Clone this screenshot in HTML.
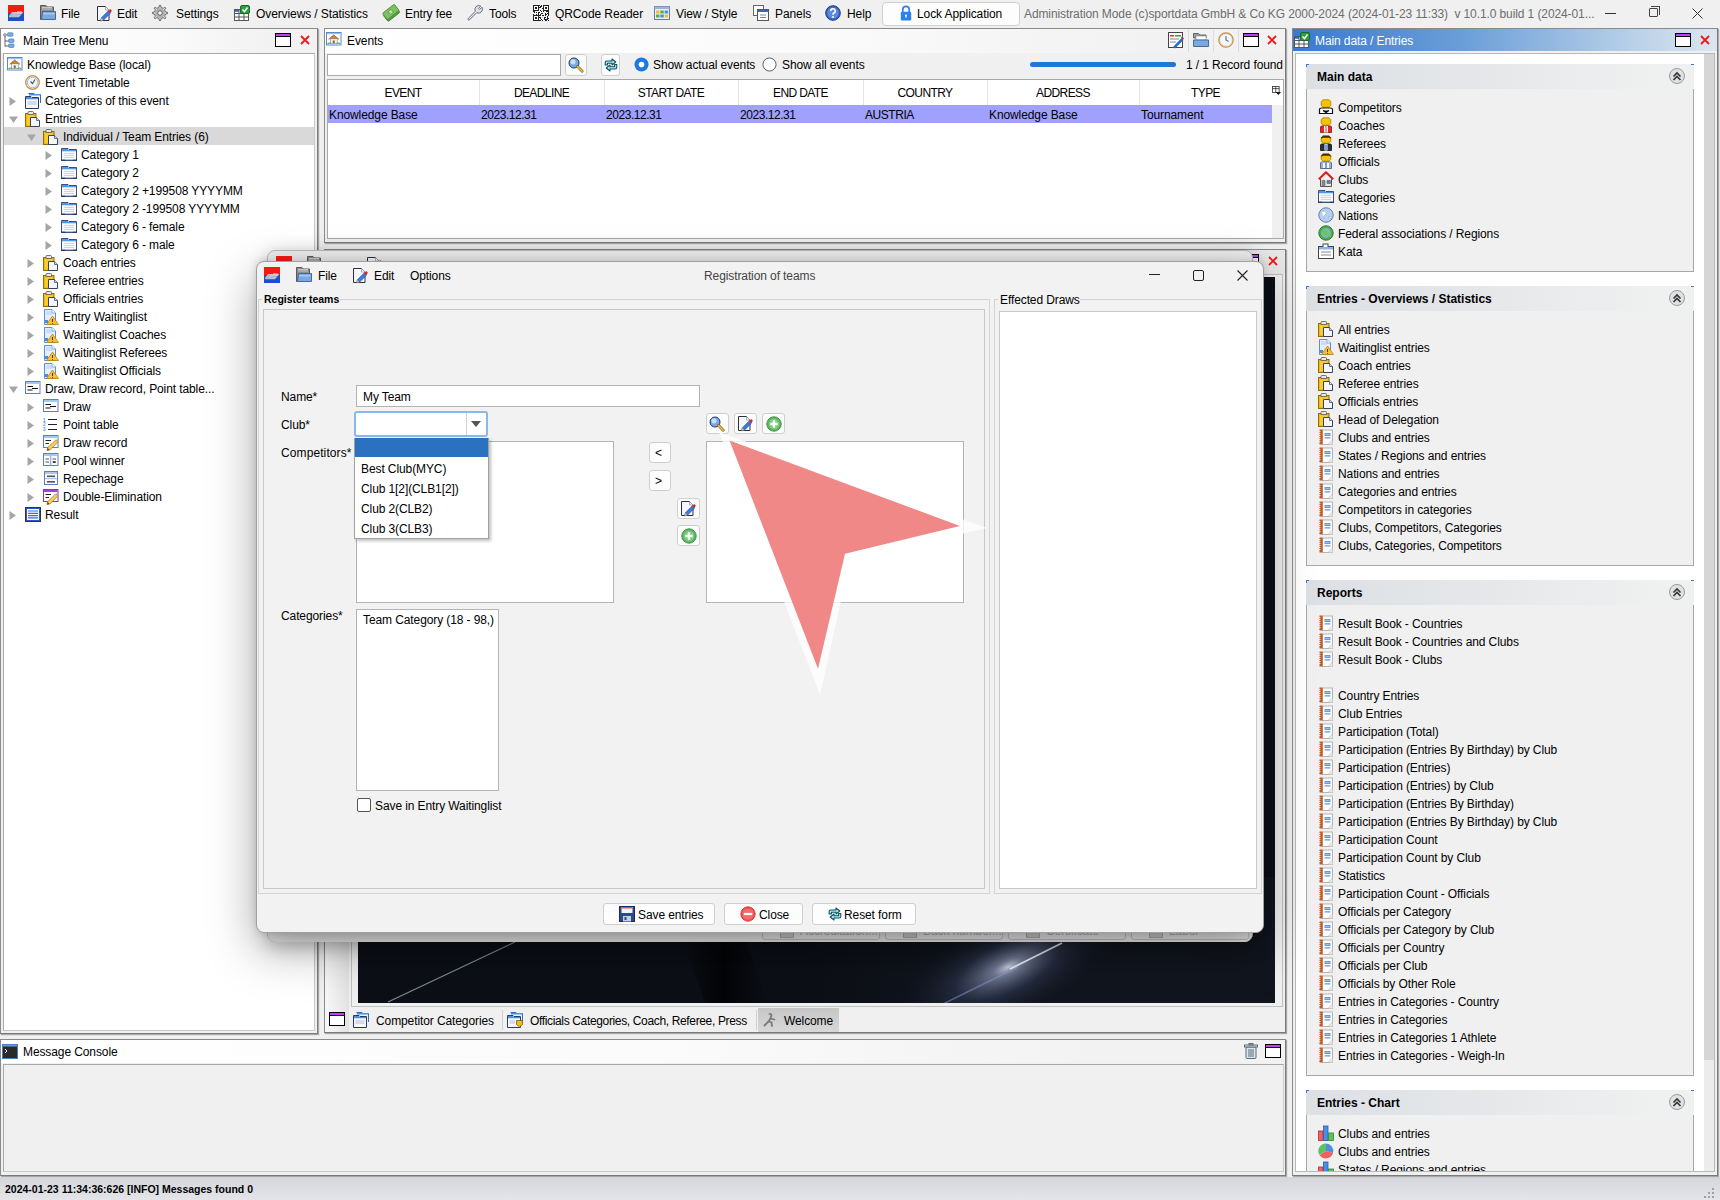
<!DOCTYPE html><html><head><meta charset="utf-8"><style>
*{margin:0;padding:0;box-sizing:border-box}
html,body{width:1720px;height:1200px;overflow:hidden;background:#f0f0f0;font-family:"Liberation Sans",sans-serif;font-size:12px;color:#000}
div,svg{position:absolute}
.t{white-space:nowrap;line-height:18px;height:18px;letter-spacing:-0.1px}
.b{font-weight:bold}
.ic{overflow:visible}
</style></head><body>
<svg width="0" height="0" style="position:absolute"><defs><symbol id="logo" viewBox="0 0 16 16" overflow="visible"><rect x="0" y="0" width="16" height="8.5" fill="#f41a14"/><rect x="0" y="8" width="16" height="8" fill="#1c4fcf"/><path d="M1.5 11 L4 7.5 H14.5 L13.5 9 H6 L5.5 9.8 H12.5 L11 11.8 H1.5Z" fill="#b4b4b4" stroke="#fff" stroke-width="0.5"/><rect x="9" y="6.5" width="5" height="1" fill="#ddd"/></symbol><symbol id="folder" viewBox="0 0 16 16" overflow="visible"><path d="M0.5 0.5 H6 L7.5 2 H13.5 V14.5 H0.5Z" fill="#8c8c8c" stroke="#5a5a5a"/><path d="M2 2.5 H12 M2 4 H12" stroke="#c8c8c8"/><path d="M2.5 6.5 H15.5 V14.5 H1.5 Z" fill="#7aa8e0" stroke="#46689a"/><path d="M3 8 H14.5 V9.5 H3Z" fill="#a8c8f0"/></symbol><symbol id="edit" viewBox="0 0 16 16" overflow="visible"><path d="M1.5 1.5 H9.5 L13 5 V15.5 H1.5Z" fill="#f4f6fb" stroke="#2a3040"/><path d="M9.5 1.5 V5 H13" fill="#fff" stroke="#8a90a0" stroke-width="0.7"/><path d="M5.2 13 L12.4 5.8 L14.6 8 L7.4 15.2 L4.6 15.8Z" fill="#3a7ae8" stroke="#1a3a80" stroke-width="0.6"/><path d="M12.4 5.8 L13.6 4.6 Q14.3 4 15 4.6 L15.4 5 Q16 5.7 15.4 6.4 L14.6 8Z" fill="#e82020"/><path d="M4.6 15.8 L5.2 13 L7.4 15.2Z" fill="#f0c050"/></symbol><symbol id="gear" viewBox="0 0 16 16" overflow="visible"><path d="M13.51 6.99 L15.56 7.25 L15.56 8.75 L13.51 9.01 L12.61 11.18 L13.88 12.82 L12.82 13.88 L11.18 12.61 L9.01 13.51 L8.75 15.56 L7.25 15.56 L6.99 13.51 L4.82 12.61 L3.18 13.88 L2.12 12.82 L3.39 11.18 L2.49 9.01 L0.44 8.75 L0.44 7.25 L2.49 6.99 L3.39 4.82 L2.12 3.18 L3.18 2.12 L4.82 3.39 L6.99 2.49 L7.25 0.44 L8.75 0.44 L9.01 2.49 L11.18 3.39 L12.82 2.12 L13.88 3.18 L12.61 4.82Z" fill="#d8d8d8" stroke="#6a6a6a" stroke-width="1"/><circle cx="8" cy="8" r="4.2" fill="#bdbdbd" stroke="#8a8a8a" stroke-width="0.6"/><circle cx="8" cy="8" r="2.3" fill="#fafafa" stroke="#5a5a5a" stroke-width="1"/></symbol><symbol id="overview" viewBox="0 0 16 16" overflow="visible"><rect x="0.5" y="4.5" width="14" height="11" fill="#fff" stroke="#555"/><path d="M0.5 8.5h14M0.5 12h14M5 4.5v11M10 8.5v7" stroke="#555" stroke-width="1"/><rect x="1" y="5" width="4" height="1.8" fill="#2a6ad0"/><rect x="6.5" y="0.5" width="9" height="8" rx="1.5" fill="#2aa040" stroke="#1a6a20"/><path d="M8.5 4.5l2 2 3-4" stroke="#fff" stroke-width="1.5" fill="none"/></symbol><symbol id="money" viewBox="0 0 16 16" overflow="visible"><g transform="rotate(-38 8 8)"><rect x="0.5" y="5" width="15" height="8" rx="1" fill="#5aa048" stroke="#3a7a2a" stroke-width="0.8"/><rect x="1" y="3" width="15" height="8" rx="1" fill="#7cc060" stroke="#4a8a38" stroke-width="0.8"/><circle cx="8.5" cy="7" r="2.2" fill="#b8e0a0" stroke="#4a8a38" stroke-width="0.6"/></g></symbol><symbol id="wrench" viewBox="0 0 16 16" overflow="visible"><path d="M1.2 13.4 L8.3 6.3 A4 4 0 0 1 13.8 1 L11.5 3.3 L12.7 4.5 L15 2.2 A4 4 0 0 1 9.7 7.7 L2.6 14.8 Q1.9 15.5 1.2 14.8 Q0.5 14.1 1.2 13.4Z" fill="#dfe3e8" stroke="#5c6470" stroke-width="0.9" stroke-linejoin="round"/></symbol><symbol id="qr" viewBox="0 0 16 16" overflow="visible"><g fill="#222"><rect x="6" y="0" width="1" height="1"/><rect x="8" y="0" width="1" height="1"/><rect x="7" y="1" width="1" height="1"/><rect x="8" y="1" width="1" height="1"/><rect x="6" y="2" width="1" height="1"/><rect x="7" y="2" width="1" height="1"/><rect x="9" y="3" width="1" height="1"/><rect x="7" y="5" width="1" height="1"/><rect x="0" y="6" width="1" height="1"/><rect x="1" y="6" width="1" height="1"/><rect x="8" y="6" width="1" height="1"/><rect x="10" y="6" width="1" height="1"/><rect x="13" y="6" width="1" height="1"/><rect x="14" y="6" width="1" height="1"/><rect x="15" y="6" width="1" height="1"/><rect x="1" y="7" width="1" height="1"/><rect x="3" y="7" width="1" height="1"/><rect x="5" y="7" width="1" height="1"/><rect x="6" y="7" width="1" height="1"/><rect x="15" y="7" width="1" height="1"/><rect x="5" y="8" width="1" height="1"/><rect x="8" y="8" width="1" height="1"/><rect x="9" y="8" width="1" height="1"/><rect x="12" y="8" width="1" height="1"/><rect x="14" y="8" width="1" height="1"/><rect x="15" y="8" width="1" height="1"/><rect x="0" y="9" width="1" height="1"/><rect x="3" y="9" width="1" height="1"/><rect x="5" y="9" width="1" height="1"/><rect x="7" y="9" width="1" height="1"/><rect x="12" y="9" width="1" height="1"/><rect x="13" y="9" width="1" height="1"/><rect x="15" y="9" width="1" height="1"/><rect x="6" y="10" width="1" height="1"/><rect x="7" y="10" width="1" height="1"/><rect x="9" y="10" width="1" height="1"/><rect x="10" y="10" width="1" height="1"/><rect x="12" y="10" width="1" height="1"/><rect x="15" y="10" width="1" height="1"/><rect x="14" y="11" width="1" height="1"/><rect x="6" y="12" width="1" height="1"/><rect x="7" y="12" width="1" height="1"/><rect x="11" y="12" width="1" height="1"/><rect x="12" y="12" width="1" height="1"/><rect x="14" y="12" width="1" height="1"/><rect x="7" y="13" width="1" height="1"/><rect x="11" y="13" width="1" height="1"/><rect x="14" y="13" width="1" height="1"/><rect x="15" y="13" width="1" height="1"/><rect x="8" y="14" width="1" height="1"/><rect x="11" y="14" width="1" height="1"/><rect x="12" y="14" width="1" height="1"/><rect x="13" y="14" width="1" height="1"/><rect x="14" y="14" width="1" height="1"/><rect x="6" y="15" width="1" height="1"/><rect x="7" y="15" width="1" height="1"/><rect x="9" y="15" width="1" height="1"/><rect x="12" y="15" width="1" height="1"/><rect x="13" y="15" width="1" height="1"/><rect x="15" y="15" width="1" height="1"/><path d="M0 0h6v6h-6z M10 0h6v6h-6z M0 10h6v6h-6z" /></g><g fill="#fff"><rect x="1" y="1" width="4" height="4"/><rect x="11" y="1" width="4" height="4"/><rect x="1" y="11" width="4" height="4"/></g><g fill="#222"><rect x="2" y="2" width="2" height="2"/><rect x="12" y="2" width="2" height="2"/><rect x="2" y="12" width="2" height="2"/></g></symbol><symbol id="view" viewBox="0 0 16 16" overflow="visible"><rect x="0.5" y="1.5" width="15" height="13" fill="#e8eef8" stroke="#6a7a9a"/><rect x="0.5" y="1.5" width="15" height="2.5" fill="#9ab4dc"/><g><rect x="2" y="5.5" width="3.5" height="3" fill="#f0c030"/><rect x="6.3" y="5.5" width="3.5" height="3" fill="#60b040"/><rect x="10.6" y="5.5" width="3.5" height="3" fill="#4a90e0"/><rect x="2" y="9.5" width="3.5" height="3" fill="#60b040"/><rect x="6.3" y="9.5" width="3.5" height="3" fill="#4a90e0"/><rect x="10.6" y="9.5" width="3.5" height="3" fill="#f0c030"/></g></symbol><symbol id="panels" viewBox="0 0 16 16" overflow="visible"><rect x="0.5" y="0.5" width="10" height="10" fill="#fff" stroke="#666"/><rect x="4.5" y="4.5" width="11" height="11" fill="#fff" stroke="#555"/><rect x="5" y="5" width="10" height="2" fill="#3a6ab0"/><path d="M7 10h6M7 12.5h6" stroke="#888"/></symbol><symbol id="help" viewBox="0 0 16 16" overflow="visible"><circle cx="8" cy="8" r="7.3" fill="#3a6ac8" stroke="#223a80"/><circle cx="8" cy="8" r="5.5" fill="#5a8ae0"/><path d="M5.8 6 a2.2 2.2 0 1 1 3 2 c-0.8 0.4 -0.8 1 -0.8 1.8" stroke="#fff" stroke-width="1.6" fill="none"/><circle cx="8" cy="12" r="1" fill="#fff"/></symbol><symbol id="lock" viewBox="0 0 16 16" overflow="visible"><path d="M2.8 7 V4.6 a3.2 3.2 0 0 1 6.4 0 V7" stroke="#2a82ee" stroke-width="1.7" fill="none"/><rect x="0.8" y="6.8" width="10.4" height="8.6" rx="1.2" fill="#2a82ee"/><circle cx="6" cy="10.6" r="1" fill="#fff"/><rect x="5.5" y="10.6" width="1" height="2.2" fill="#fff"/></symbol><symbol id="tree" viewBox="0 0 16 16" overflow="visible"><circle cx="2" cy="3" r="1.3" fill="#fff" stroke="#555" stroke-width="0.8"/><path d="M2 4.3 V14.5 M2 9 H5.5 M2 14 H5.5" stroke="#555" stroke-width="0.9"/><rect x="4.5" y="0.8" width="5.5" height="3.4" rx="1" fill="#7ab0e8" stroke="#4a78b0" stroke-width="0.7"/><rect x="5.5" y="7" width="5.5" height="3.4" rx="1" fill="#7ab0e8" stroke="#4a78b0" stroke-width="0.7"/><rect x="5.5" y="12" width="5.5" height="3.4" rx="1" fill="#7ab0e8" stroke="#4a78b0" stroke-width="0.7"/></symbol><symbol id="house" viewBox="0 0 16 16" overflow="visible"><rect x="0.5" y="0.5" width="14.5" height="12.5" fill="#fff" stroke="#5a88d0"/><rect x="1" y="1" width="13.5" height="1.2" fill="#9cc0f0"/><path d="M2.5 7.2 L7.75 3 L13 7.2" fill="#d08040" stroke="#a86030" stroke-width="0.8"/><rect x="4.3" y="6.8" width="6.9" height="4.5" fill="#f4f0e8" stroke="#777" stroke-width="0.5"/><rect x="6.8" y="8.5" width="1.9" height="2.8" fill="#666"/><path d="M1.5 11.6 Q4 10.4 5 11.6 M10.5 11.6 Q12 10.4 14 11.6" stroke="#40a030" stroke-width="1.2" fill="none"/></symbol><symbol id="clock" viewBox="0 0 16 16" overflow="visible"><circle cx="7.5" cy="7.5" r="6.8" fill="#f8f4ec" stroke="#c8904a" stroke-width="1.3"/><circle cx="7.5" cy="7.5" r="5.2" fill="#eef4fc" stroke="#8aaedc" stroke-width="0.8"/><path d="M5.5 6.5 L7.5 8.5 L10 4.5" stroke="#555" stroke-width="1.1" fill="none"/></symbol><symbol id="cats" viewBox="0 0 16 16" overflow="visible"><path d="M0.5 13.5 V1.5 H7 L8 2.5 H15.5 V13.5Z" fill="#f8f9fc" stroke="#2a3a6a" stroke-width="0.9"/><path d="M1 2 H6.8 L7.8 3 H15 V4.2 H1Z" fill="#4a98f0"/><path d="M3 6.5 H13 M3 8.5 H13 M3 10.5 H13" stroke="#c4cad6" stroke-width="0.8"/><path d="M0 12.6 H4 V14 H0Z M12 12.6 H16 V14 H12Z" fill="#2a3a6a"/><path d="M4 12.5 H12" stroke="#a8b2c4" stroke-width="0.8"/></symbol><symbol id="clip" viewBox="0 0 16 16" overflow="visible"><rect x="0.5" y="2.5" width="10.5" height="13" fill="#eebb10" stroke="#9a6a08"/><rect x="2" y="4" width="7.5" height="10" fill="#f8cc30"/><path d="M3 3.5 V1.5 Q3 0.5 4 0.5 H7.5 Q8.5 0.5 8.5 1.5 V3.5Z" fill="#e8e8e8" stroke="#555" stroke-width="0.8"/><path d="M5.5 6.5 H11.5 L14.5 9.5 V15.5 H5.5Z" fill="#f4f6fa" stroke="#3a4258"/><path d="M11.5 6.5 V9.5 H14.5" fill="#d8dce8" stroke="#3a4258" stroke-width="0.7"/></symbol><symbol id="wait" viewBox="0 0 16 16" overflow="visible"><path d="M1.5 0.5 H9 L12.5 4 V15.5 H1.5Z" fill="#e4eefc" stroke="#5a90d8"/><path d="M9 0.5 V4 H12.5" fill="#fff" stroke="#5a90d8" stroke-width="0.7"/><path d="M3 3 H8 M3 5 H9" stroke="#a8c4e8" stroke-width="0.8"/><rect x="2" y="11" width="3" height="3" fill="#4a8ae0"/><path d="M9.5 7 L15.5 15.5 H3.5Z" fill="#f6c030" stroke="#c08010" stroke-width="0.8"/><path d="M9.5 10 V13 M9.5 14 V14.8" stroke="#5a3a00" stroke-width="1"/></symbol><symbol id="draw" viewBox="0 0 16 16" overflow="visible"><rect x="0.5" y="0.5" width="14.5" height="12" fill="#fdfdfd" stroke="#5a80c0"/><rect x="1" y="1" width="13.5" height="2" fill="#a8c8f0"/><path d="M2.5 5.5 H8 M7 7.5 H13 M2.5 9 H7.5" stroke="#111" stroke-width="1.2"/></symbol><symbol id="points" viewBox="0 0 16 16" overflow="visible"><g fill="#5a90e0" font-size="4.5" font-family="Liberation Sans" font-weight="bold"><text x="0" y="4.5">1</text><text x="0" y="9">2</text><text x="0" y="13.5">3</text></g><path d="M5 2.5h9M5 7.5h9M5 12.5h9" stroke="#222" stroke-width="1.1"/></symbol><symbol id="drawrec" viewBox="0 0 16 16" overflow="visible"><rect x="0.5" y="0.5" width="14.5" height="12" fill="#fdfdfd" stroke="#5a80c0"/><rect x="1" y="1" width="13.5" height="2" fill="#a8c8f0"/><path d="M2.5 5.5 H8 M2.5 8.5 H6" stroke="#222" stroke-width="1.1"/><path d="M4.5 12.8 L12.3 5.4 Q13.2 4.7 14.2 5.6 Q15.1 6.6 14.4 7.4 L6.8 15 L4 15.6Z" fill="#f6d060" stroke="#b07820" stroke-width="0.8"/><path d="M4 15.6 L4.5 12.8 L6.8 15Z" fill="#7a5030"/></symbol><symbol id="pool" viewBox="0 0 16 16" overflow="visible"><rect x="0.5" y="0.5" width="14.5" height="12" fill="#fdfdfd" stroke="#5a80c0"/><rect x="1" y="1" width="13.5" height="2" fill="#a8c8f0"/><path d="M7.75 3 V12.5" stroke="#7a9ad0"/><path d="M2.5 6 H6 M2.5 9 H6 M9.5 6 H13 M9.5 9 H13" stroke="#555" stroke-width="1"/><rect x="10" y="8.3" width="2.5" height="1.5" fill="#222"/></symbol><symbol id="repe" viewBox="0 0 16 16" overflow="visible"><rect x="1.5" y="0.5" width="13" height="13" fill="#fdfdfd" stroke="#5a80c0"/><rect x="2" y="1" width="12" height="2" fill="#a8c8f0"/><rect x="2" y="7" width="12" height="1.2" fill="#a8c8f0"/><rect x="4" y="4.5" width="8" height="1.6" fill="#555"/><rect x="4" y="10" width="8" height="1.6" fill="#555"/></symbol><symbol id="dbl" viewBox="0 0 16 16" overflow="visible"><rect x="0.5" y="0.5" width="14.5" height="12" fill="#fdfdfd" stroke="#8a30d0"/><rect x="1" y="1" width="13.5" height="2" fill="#a040e8"/><path d="M2.5 5.5 H8 M2.5 8.5 H6" stroke="#222" stroke-width="1.1"/><path d="M4.5 12.8 L12.3 5.4 Q13.2 4.7 14.2 5.6 Q15.1 6.6 14.4 7.4 L6.8 15 L4 15.6Z" fill="#f6d060" stroke="#b07820" stroke-width="0.8"/><path d="M4 15.6 L4.5 12.8 L6.8 15Z" fill="#7a5030"/></symbol><symbol id="result" viewBox="0 0 16 16" overflow="visible"><rect x="0.5" y="0.5" width="15" height="14" fill="#2a58c8" stroke="#333"/><rect x="2" y="2" width="12" height="11" fill="#fff"/><path d="M3 4 H13 M3 6.3 H13 M3 8.6 H13 M3 10.9 H13" stroke="#2a70e8" stroke-width="1.2"/></symbol><symbol id="max" viewBox="0 0 16 16" overflow="visible"><rect x="0" y="0" width="16" height="14" fill="#000"/><rect x="1" y="1" width="14" height="2" fill="#c040f8"/><rect x="1" y="4" width="14" height="9" fill="#fff"/></symbol><symbol id="x" viewBox="0 0 16 16" overflow="visible"><path d="M1 1 L9 9 M9 1 L1 9" stroke="#f01818" stroke-width="1.8"/></symbol><symbol id="search" viewBox="0 0 16 16" overflow="visible"><circle cx="6" cy="6" r="5" fill="#7aa8e0" stroke="#1a3a78" stroke-width="1"/><circle cx="5" cy="4.8" r="2.6" fill="#d8e8fa" opacity="0.85"/><path d="M9.6 9.6 L14.2 14.2" stroke="#7a5a10" stroke-width="2.8" stroke-linecap="round"/><path d="M9.6 9.6 L14.2 14.2" stroke="#f0c040" stroke-width="1.6" stroke-linecap="round"/></symbol><symbol id="refresh" viewBox="0 0 16 16" overflow="visible"><path d="M2.2 8 V5.5 Q2.2 4 3.8 4 H9 V2 L12.8 5 L9 8 V6.3 H4.4 V8Z" fill="#b8e4f4" stroke="#0a5468" stroke-width="1.1" stroke-linejoin="round"/><path d="M13.8 7.5 V10.5 Q13.8 12 12.2 12 H7 V14 L3.2 11 L7 8 V9.7 H11.6 V7.5Z" fill="#a8ecec" stroke="#0a5468" stroke-width="1.1" stroke-linejoin="round"/></symbol><symbol id="report" viewBox="0 0 16 16" overflow="visible"><rect x="4.5" y="1" width="10" height="14.5" fill="#fdfdfd" stroke="#b4b4b4"/><path d="M11 15.5 L14.5 12 V15.5Z" fill="#e4e4e4"/><path d="M10.5 15 L14.5 11" stroke="#c8c8c8"/><rect x="1.5" y="0.5" width="3" height="15" fill="#c85620"/><g fill="#e8e8e8"><rect x="0.3" y="2" width="2.2" height="1"/><rect x="0.3" y="4" width="2.2" height="1"/><rect x="0.3" y="6" width="2.2" height="1"/><rect x="0.3" y="8" width="2.2" height="1"/><rect x="0.3" y="10" width="2.2" height="1"/><rect x="0.3" y="12" width="2.2" height="1"/></g><rect x="6.5" y="4" width="6" height="3" rx="0.6" fill="#6a9ae2"/><rect x="7.5" y="5.2" width="4" height="0.8" fill="#a8c8f0"/><rect x="6.5" y="8.2" width="6" height="1.2" rx="0.5" fill="#6a9ae2"/></symbol><symbol id="comp" viewBox="0 0 16 16" overflow="visible"><path d="M5 0.8 H11 L12.8 2.6 V6.4 L11 8.2 H5 L3.2 6.4 V2.6Z" fill="#f4c400" stroke="#b07a00" stroke-width="0.8"/><path d="M1.5 10.5 Q1.5 9 4 9 H12 Q14.5 9 14.5 10.5 V14.5 H1.5Z" fill="#fff" stroke="#111" stroke-width="1.2"/><path d="M5 11.5 L8 13.5 L11 11.5 M8 13.5 V15" stroke="#111" stroke-width="1.3"/></symbol><symbol id="coach" viewBox="0 0 16 16" overflow="visible"><path d="M5 0.8 H11 L12.8 2.6 V6.4 L11 8.2 H5 L3.2 6.4 V2.6Z" fill="#f4c400" stroke="#b07a00" stroke-width="0.8"/><path d="M2.5 10 Q2.5 9 4 9 H12 Q13.5 9 13.5 10 V15.5 H2.5Z" fill="#e02828" stroke="#901010" stroke-width="0.8"/><path d="M6 9 H10 V15.5 H6Z" fill="#fff"/><path d="M7.5 9 H8.5 V15.5 H7.5Z" fill="#e02828"/></symbol><symbol id="ref" viewBox="0 0 16 16" overflow="visible"><path d="M5 0.8 H11 L12.8 2.6 V6.4 L11 8.2 H5 L3.2 6.4 V2.6Z" fill="#f4c400" stroke="#b07a00" stroke-width="0.8"/><path d="M3.2 3.8 V2.6 L5 0.8 H11 L12.8 2.6 V3.8 L11 2.8 H5Z" fill="#4a2a10"/><path d="M2.5 10 Q2.5 9 4 9 H12 Q13.5 9 13.5 10 V15.5 H2.5Z" fill="#2a2e38" stroke="#111" stroke-width="0.8"/><path d="M6.5 9 H9.5 V15.5 H6.5Z" fill="#fff"/><path d="M7.3 9.5 H8.7 V15 H7.3Z" fill="#2a80e0"/></symbol><symbol id="off" viewBox="0 0 16 16" overflow="visible"><path d="M5 0.8 H11 L12.8 2.6 V6.4 L11 8.2 H5 L3.2 6.4 V2.6Z" fill="#f4c400" stroke="#b07a00" stroke-width="0.8"/><path d="M3.2 3.8 V2.6 L5 0.8 H11 L12.8 2.6 V3.8 L11 2.8 H5Z" fill="#4a2a10"/><path d="M2.5 10 Q2.5 9 4 9 H12 Q13.5 9 13.5 10 V15.5 H2.5Z" fill="#fafafa" stroke="#3a4a70" stroke-width="0.8"/><path d="M3 10 H5 V15 H3Z M11 10 H13 V15 H11Z" fill="#a0b0d0"/><path d="M7.3 9.5 H8.7 V15 H7.3Z" fill="#2a80e0"/></symbol><symbol id="club" viewBox="0 0 16 16" overflow="visible"><path d="M2.5 8 V15.5 H13.5 V8" fill="#e8e8e8" stroke="#555" stroke-width="1"/><path d="M0.8 8.2 L8 1.2 L15.2 8.2" stroke="#e41818" stroke-width="2" fill="none" stroke-linejoin="round"/><path d="M4 9.5 H7 V15.5 H4Z" fill="#8a8a8a" stroke="#555" stroke-width="0.5"/><path d="M9 9.5 H12.5 V12.5 H9Z" fill="#5a7ab8" stroke="#555" stroke-width="0.5"/></symbol><symbol id="globe" viewBox="0 0 16 16" overflow="visible"><circle cx="8" cy="8" r="7.2" fill="#b8d0f0" stroke="#5a80b0"/><path d="M4 5 q2 -2 4 0 q1 2 -1 3 q-2 1 -1 4 M10 10 l3 -1 v3z" fill="#fff" stroke="#8aa8d0" stroke-width="0.6"/></symbol><symbol id="fed" viewBox="0 0 16 16" overflow="visible"><circle cx="8" cy="8" r="7.2" fill="#50a850" stroke="#2a7a2a"/><circle cx="8" cy="8" r="5" fill="#8ac8f0" opacity="0.6"/><path d="M3 6 q3 -3 6 0 q2 3 -2 4 M9 11 l4 -2 v3z" fill="#70c060"/></symbol><symbol id="kata" viewBox="0 0 16 16" overflow="visible"><rect x="0.5" y="3.5" width="15" height="12" fill="#fff" stroke="#444"/><rect x="5" y="1" width="5" height="3.5" fill="#fff" stroke="#444"/><rect x="1" y="4" width="14" height="2.5" fill="#8ab4e8"/><path d="M3 9h10M3 12h10" stroke="#888"/></symbol><symbol id="bars" viewBox="0 0 16 16" overflow="visible"><rect x="0.5" y="6" width="4.5" height="9.5" fill="#f06060" stroke="#b03030" stroke-width="0.8"/><rect x="5.5" y="1" width="4.5" height="14.5" fill="#4a90e0" stroke="#2a5ab0" stroke-width="0.8"/><rect x="10.5" y="8" width="5" height="7.5" fill="#60c060" stroke="#2a8a2a" stroke-width="0.8"/></symbol><symbol id="pie" viewBox="0 0 16 16" overflow="visible"><path d="M8 8 L8 0.5 A7.5 7.5 0 0 1 15 10Z" fill="#4a90e0"/><path d="M8 8 L15 10 A7.5 7.5 0 0 1 1.5 12Z" fill="#f06060"/><path d="M8 8 L1.5 12 A7.5 7.5 0 0 1 8 0.5Z" fill="#60c060"/></symbol><symbol id="save" viewBox="0 0 16 16" overflow="visible"><rect x="0.5" y="0.5" width="15" height="15" fill="#2a4a8a" stroke="#1a2a5a"/><rect x="2.5" y="1" width="11" height="6" fill="#f4f4f4"/><rect x="2.5" y="1" width="11" height="1.5" fill="#e05050"/><rect x="4" y="10" width="8" height="5.5" fill="#c8d0e0"/><rect x="5.5" y="11" width="2" height="3" fill="#2a4a8a"/></symbol><symbol id="closebtn" viewBox="0 0 16 16" overflow="visible"><circle cx="8" cy="8" r="7.2" fill="#f05050" stroke="#d03838" stroke-width="0.9"/><circle cx="8" cy="8" r="5.6" fill="#f46a6a"/><rect x="3.8" y="6.9" width="8.4" height="2.2" fill="#fff"/></symbol><symbol id="reset" viewBox="0 0 16 16" overflow="visible"><path d="M2.2 8 V5.5 Q2.2 4 3.8 4 H9 V2 L12.8 5 L9 8 V6.3 H4.4 V8Z" fill="#b8e4f4" stroke="#0a5468" stroke-width="1.1" stroke-linejoin="round"/><path d="M13.8 7.5 V10.5 Q13.8 12 12.2 12 H7 V14 L3.2 11 L7 8 V9.7 H11.6 V7.5Z" fill="#a8ecec" stroke="#0a5468" stroke-width="1.1" stroke-linejoin="round"/></symbol><symbol id="trash" viewBox="0 0 16 16" overflow="visible"><rect x="3" y="4" width="10" height="11.5" rx="1" fill="#dce4ec" stroke="#5a6a7a"/><rect x="1.5" y="2" width="13" height="2" fill="#dce4ec" stroke="#5a6a7a"/><rect x="6" y="0.5" width="4" height="1.5" fill="none" stroke="#5a6a7a"/><path d="M6 6v8M8 6v8M10 6v8" stroke="#5a6a7a"/></symbol><symbol id="console" viewBox="0 0 16 16" overflow="visible"><rect x="0.5" y="0.5" width="15" height="14" fill="#2a2a2a" stroke="#4a7ac8"/><rect x="1" y="1" width="14" height="1.5" fill="#6a9ad8"/><path d="M3 5l2 2-2 2" stroke="#fff" fill="none" stroke-width="1"/></symbol><symbol id="collapse" viewBox="0 0 16 16" overflow="visible"><circle cx="8" cy="8" r="7.5" fill="#dfe1e5" stroke="#9a9a9a"/><path d="M4.5 8.5 L8 5 L11.5 8.5 M4.5 12 L8 8.5 L11.5 12" stroke="#333" stroke-width="1.6" fill="none"/></symbol><symbol id="cattab" viewBox="0 0 16 16" overflow="visible"><path d="M3.5 0.5 H9 L10 1.5 H15.5 V10" fill="none" stroke="#3a6ab0"/><rect x="4" y="1" width="11" height="1.5" fill="#4a90e8"/><path d="M0.5 15.5 V3.5 H6 L7 4.5 H13.5 V15.5Z" fill="#f6f8fb" stroke="#2a3a68"/><path d="M1 4 H5.8 L6.8 5 H13 V6.3 H1Z" fill="#4a90e8"/><path d="M2.5 9 H11.5 M2.5 11 H11.5" stroke="#b4bccc"/></symbol><symbol id="offtab" viewBox="0 0 16 16" overflow="visible"><path d="M3.5 0.5 H9 L10 1.5 H15.5 V10" fill="none" stroke="#3a6ab0"/><rect x="4" y="1" width="11" height="1.5" fill="#4a90e8"/><path d="M0.5 15.5 V3.5 H6 L7 4.5 H13.5 V15.5Z" fill="#f6f8fb" stroke="#2a3a68"/><path d="M1 4 H5.8 L6.8 5 H13 V6.3 H1Z" fill="#4a90e8"/><path d="M2.5 9 H8 M2.5 11 H8" stroke="#b4bccc"/><path d="M9.5 8.5 H15.5 V12.5 L12.5 15 L9.5 12.5Z" fill="#f0c010" stroke="#6a4a00" stroke-width="0.7"/></symbol><symbol id="run" viewBox="0 0 16 16" overflow="visible"><path d="M7.5 2 Q9 1.5 9.5 3 L8.5 6.5 L12.5 7.5" stroke="#7a7a7a" stroke-width="1.8" fill="none" stroke-linecap="round"/><path d="M8.5 6.5 L6.5 9.5 L2.5 13.5 M6.5 9.5 L9.5 10.5 L10 14" stroke="#7a7a7a" stroke-width="1.8" fill="none" stroke-linecap="round"/></symbol><symbol id="edit2" viewBox="0 0 16 16" overflow="visible"><path d="M1.5 1.5 H9.5 L13 5 V15.5 H1.5Z" fill="#f4f6fb" stroke="#2a3040"/><path d="M9.5 1.5 V5 H13" fill="#fff" stroke="#8a90a0" stroke-width="0.7"/><path d="M5.2 13 L12.4 5.8 L14.6 8 L7.4 15.2 L4.6 15.8Z" fill="#3a7ae8" stroke="#1a3a80" stroke-width="0.6"/><path d="M12.4 5.8 L13.6 4.6 Q14.3 4 15 4.6 L15.4 5 Q16 5.7 15.4 6.4 L14.6 8Z" fill="#e82020"/><path d="M4.6 15.8 L5.2 13 L7.4 15.2Z" fill="#f0c050"/></symbol><symbol id="add" viewBox="0 0 16 16" overflow="visible"><circle cx="8" cy="8" r="7.2" fill="#5ab45e" stroke="#3a8a3e" stroke-width="0.9"/><circle cx="8" cy="8" r="5.4" fill="#7ccc7e"/><path d="M8 4.3 V11.7 M4.3 8 H11.7" stroke="#fff" stroke-width="2.4"/></symbol><symbol id="colhdr" viewBox="0 0 16 16" overflow="visible"><rect x="0.5" y="0.5" width="9" height="8" fill="#fff" stroke="#222"/><path d="M0.5 3.5h9M5 0.5v8" stroke="#222"/><path d="M5 8 L12 8 L8.5 12z" fill="#111"/></symbol><symbol id="radio_on" viewBox="0 0 16 16" overflow="visible"><circle cx="8" cy="8" r="7.5" fill="#1e78e0"/><circle cx="8" cy="8" r="3" fill="#fff"/></symbol><symbol id="radio_off" viewBox="0 0 16 16" overflow="visible"><circle cx="8" cy="8" r="7" fill="#fff" stroke="#555" stroke-width="1"/></symbol><symbol id="editsm" viewBox="0 0 16 16" overflow="visible"><path d="M1.5 1.5 H9.5 L13 5 V15.5 H1.5Z" fill="#f4f6fb" stroke="#2a3040"/><path d="M9.5 1.5 V5 H13" fill="#fff" stroke="#8a90a0" stroke-width="0.7"/><path d="M5.2 13 L12.4 5.8 L14.6 8 L7.4 15.2 L4.6 15.8Z" fill="#3a7ae8" stroke="#1a3a80" stroke-width="0.6"/><path d="M12.4 5.8 L13.6 4.6 Q14.3 4 15 4.6 L15.4 5 Q16 5.7 15.4 6.4 L14.6 8Z" fill="#e82020"/><path d="M4.6 15.8 L5.2 13 L7.4 15.2Z" fill="#f0c050"/></symbol><symbol id="timer" viewBox="0 0 16 16" overflow="visible"><circle cx="8" cy="8" r="7.2" fill="#f0e0c0" stroke="#c09050" stroke-width="1.2"/><circle cx="8" cy="8" r="5.5" fill="#f4f8ff"/><path d="M8 4v4l2.5 1.5" stroke="#4a6a9a" stroke-width="1.1" fill="none"/></symbol><symbol id="tbfolder" viewBox="0 0 16 16" overflow="visible"><path d="M0.5 1.5h5l1.5 1.5h6v3h-12.5z" fill="#9a9a9a" stroke="#666"/><path d="M3 4h10v4H3z" fill="#fff" stroke="#888" stroke-width="0.6"/><path d="M0.5 14.5 L0.5 8 H15.5 V14.5Z" fill="#7aaae0" stroke="#4a6a9a"/></symbol><symbol id="tbedit" viewBox="0 0 16 16" overflow="visible"><rect x="0.5" y="0.5" width="14" height="15" fill="#fff" stroke="#444"/><rect x="2" y="3" width="4" height="1.5" fill="#e03030"/><rect x="7" y="3" width="6" height="1.5" fill="#30a030"/><path d="M2 7h9M2 10h6" stroke="#888"/><path d="M5 15 L13.5 6 L15.5 8 L7 16.5Z" fill="#2a6ad0"/><path d="M13 5.5 l1-1 2 2 -1 1z" fill="#e02020"/></symbol></defs></svg>
<svg class="ic" style="left:8px;top:5px;" width="16" height="16" viewBox="0 0 16 16"><use href="#logo"/></svg>
<svg class="ic" style="left:40px;top:5px;" width="16" height="16" viewBox="0 0 16 16"><use href="#folder"/></svg>
<div class="t" style="left:61px;top:4.84px;">File</div>
<svg class="ic" style="left:96px;top:5px;" width="16" height="16" viewBox="0 0 16 16"><use href="#edit"/></svg>
<div class="t" style="left:117px;top:4.84px;">Edit</div>
<svg class="ic" style="left:152px;top:5px;" width="16" height="16" viewBox="0 0 16 16"><use href="#gear"/></svg>
<div class="t" style="left:176px;top:4.84px;">Settings</div>
<svg class="ic" style="left:234px;top:5px;" width="16" height="16" viewBox="0 0 16 16"><use href="#overview"/></svg>
<div class="t" style="left:256px;top:4.84px;">Overviews / Statistics</div>
<svg class="ic" style="left:383px;top:5px;" width="16" height="16" viewBox="0 0 16 16"><use href="#money"/></svg>
<div class="t" style="left:405px;top:4.84px;">Entry fee</div>
<svg class="ic" style="left:467px;top:5px;" width="16" height="16" viewBox="0 0 16 16"><use href="#wrench"/></svg>
<div class="t" style="left:489px;top:4.84px;">Tools</div>
<svg class="ic" style="left:533px;top:5px;" width="16" height="16" viewBox="0 0 16 16"><use href="#qr"/></svg>
<div class="t" style="left:555px;top:4.84px;">QRCode Reader</div>
<svg class="ic" style="left:654px;top:5px;" width="16" height="16" viewBox="0 0 16 16"><use href="#view"/></svg>
<div class="t" style="left:676px;top:4.84px;">View / Style</div>
<svg class="ic" style="left:753px;top:5px;" width="16" height="16" viewBox="0 0 16 16"><use href="#panels"/></svg>
<div class="t" style="left:775px;top:4.84px;">Panels</div>
<svg class="ic" style="left:825px;top:5px;" width="16" height="16" viewBox="0 0 16 16"><use href="#help"/></svg>
<div class="t" style="left:847px;top:4.84px;">Help</div>
<div class="" style="left:882px;top:2px;width:138px;height:24px;background:#fdfdfd;border:1px solid #cfcfcf;border-radius:4px"></div>
<svg class="ic" style="left:900px;top:5px;" width="16" height="16" viewBox="0 0 16 16"><use href="#lock"/></svg>
<div class="t" style="left:917px;top:4.84px;">Lock Application</div>
<div class="t" style="left:1024px;top:4.84px;color:#6d6d6d;white-space:pre">Administration Mode (c)sportdata GmbH &amp; Co KG 2000-2024 (2024-01-23 11:33)  v 10.1.0 build 1 (2024-01...</div>
<div class="" style="left:1605px;top:13px;width:11px;height:1px;background:#333"></div>
<div class="" style="left:1649px;top:8px;width:9px;height:9px;border:1px solid #444;border-radius:1px"></div>
<div class="" style="left:1651px;top:6px;width:9px;height:9px;border-top:1px solid #444;border-right:1px solid #444"></div>
<svg style="left:1692px;top:8px" width="11" height="11"><path d="M0.5 0.5L10.5 10.5M10.5 0.5L0.5 10.5" stroke="#333" stroke-width="1"/></svg>
<div class="" style="left:0px;top:28px;width:318px;height:1006px;border:1px solid #8a8a8a;border-right:1px solid #7a7a7a;border-bottom:1px solid #7a7a7a;box-shadow:1px 1px 1px #a8a8a8;background:#f0f0f0"></div>
<div class="" style="left:1px;top:29px;width:316px;height:24px;background:linear-gradient(90deg,#ffffff 0%,#fbfbfb 50%,#f2f2f2 85%)"></div>
<svg class="ic" style="left:3px;top:32px;" width="16" height="16" viewBox="0 0 16 16"><use href="#tree"/></svg>
<div class="t" style="left:23px;top:31.84px;">Main Tree Menu</div>
<svg class="ic" style="left:275px;top:33px;" width="16" height="16" viewBox="0 0 16 16"><use href="#max"/></svg>
<svg class="ic" style="left:300px;top:35px;" width="16" height="16" viewBox="0 0 16 16"><use href="#x"/></svg>
<div class="" style="left:3px;top:53px;width:312px;height:978px;background:#fff;border:1px solid #a8a8a8;border-right-color:#c8c8c8;border-bottom-color:#c8c8c8"></div>
<div class="" style="left:4px;top:127px;width:310px;height:18px;background:#d9d9d9"></div>
<svg class="ic" style="left:7px;top:57px;" width="16" height="16" viewBox="0 0 16 16"><use href="#house"/></svg>
<div class="t" style="left:27px;top:56.0px;">Knowledge Base (local)</div>
<svg class="ic" style="left:25px;top:75px;" width="16" height="16" viewBox="0 0 16 16"><use href="#clock"/></svg>
<div class="t" style="left:45px;top:74.0px;">Event Timetable</div>
<svg style="left:9px;top:97px" width="8" height="9"><path d="M0.5 0 L7 4.5 L0.5 9Z" fill="#a6a6a6"/></svg>
<svg class="ic" style="left:25px;top:93px;" width="16" height="16" viewBox="0 0 16 16"><use href="#cattab"/></svg>
<div class="t" style="left:45px;top:92.0px;">Categories of this event</div>
<svg style="left:9px;top:116px" width="9" height="8"><path d="M0 0.5 L9 0.5 L4.5 7Z" fill="#a6a6a6"/></svg>
<svg class="ic" style="left:25px;top:111px;" width="16" height="16" viewBox="0 0 16 16"><use href="#clip"/></svg>
<div class="t" style="left:45px;top:110.0px;">Entries</div>
<svg style="left:27px;top:134px" width="9" height="8"><path d="M0 0.5 L9 0.5 L4.5 7Z" fill="#a6a6a6"/></svg>
<svg class="ic" style="left:43px;top:129px;" width="16" height="16" viewBox="0 0 16 16"><use href="#clip"/></svg>
<div class="t" style="left:63px;top:128.0px;">Individual / Team Entries (6)</div>
<svg style="left:45px;top:151px" width="8" height="9"><path d="M0.5 0 L7 4.5 L0.5 9Z" fill="#a6a6a6"/></svg>
<svg class="ic" style="left:61px;top:147px;" width="16" height="16" viewBox="0 0 16 16"><use href="#cats"/></svg>
<div class="t" style="left:81px;top:146.0px;">Category 1</div>
<svg style="left:45px;top:169px" width="8" height="9"><path d="M0.5 0 L7 4.5 L0.5 9Z" fill="#a6a6a6"/></svg>
<svg class="ic" style="left:61px;top:165px;" width="16" height="16" viewBox="0 0 16 16"><use href="#cats"/></svg>
<div class="t" style="left:81px;top:164.0px;">Category 2</div>
<svg style="left:45px;top:187px" width="8" height="9"><path d="M0.5 0 L7 4.5 L0.5 9Z" fill="#a6a6a6"/></svg>
<svg class="ic" style="left:61px;top:183px;" width="16" height="16" viewBox="0 0 16 16"><use href="#cats"/></svg>
<div class="t" style="left:81px;top:182.0px;">Category 2 +199508 YYYYMM</div>
<svg style="left:45px;top:205px" width="8" height="9"><path d="M0.5 0 L7 4.5 L0.5 9Z" fill="#a6a6a6"/></svg>
<svg class="ic" style="left:61px;top:201px;" width="16" height="16" viewBox="0 0 16 16"><use href="#cats"/></svg>
<div class="t" style="left:81px;top:200.0px;">Category 2 -199508 YYYYMM</div>
<svg style="left:45px;top:223px" width="8" height="9"><path d="M0.5 0 L7 4.5 L0.5 9Z" fill="#a6a6a6"/></svg>
<svg class="ic" style="left:61px;top:219px;" width="16" height="16" viewBox="0 0 16 16"><use href="#cats"/></svg>
<div class="t" style="left:81px;top:218.0px;">Category 6 - female</div>
<svg style="left:45px;top:241px" width="8" height="9"><path d="M0.5 0 L7 4.5 L0.5 9Z" fill="#a6a6a6"/></svg>
<svg class="ic" style="left:61px;top:237px;" width="16" height="16" viewBox="0 0 16 16"><use href="#cats"/></svg>
<div class="t" style="left:81px;top:236.0px;">Category 6 - male</div>
<svg style="left:27px;top:259px" width="8" height="9"><path d="M0.5 0 L7 4.5 L0.5 9Z" fill="#a6a6a6"/></svg>
<svg class="ic" style="left:43px;top:255px;" width="16" height="16" viewBox="0 0 16 16"><use href="#clip"/></svg>
<div class="t" style="left:63px;top:254.0px;">Coach entries</div>
<svg style="left:27px;top:277px" width="8" height="9"><path d="M0.5 0 L7 4.5 L0.5 9Z" fill="#a6a6a6"/></svg>
<svg class="ic" style="left:43px;top:273px;" width="16" height="16" viewBox="0 0 16 16"><use href="#clip"/></svg>
<div class="t" style="left:63px;top:272.0px;">Referee entries</div>
<svg style="left:27px;top:295px" width="8" height="9"><path d="M0.5 0 L7 4.5 L0.5 9Z" fill="#a6a6a6"/></svg>
<svg class="ic" style="left:43px;top:291px;" width="16" height="16" viewBox="0 0 16 16"><use href="#clip"/></svg>
<div class="t" style="left:63px;top:290.0px;">Officials entries</div>
<svg style="left:27px;top:313px" width="8" height="9"><path d="M0.5 0 L7 4.5 L0.5 9Z" fill="#a6a6a6"/></svg>
<svg class="ic" style="left:43px;top:309px;" width="16" height="16" viewBox="0 0 16 16"><use href="#wait"/></svg>
<div class="t" style="left:63px;top:308.0px;">Entry Waitinglist</div>
<svg style="left:27px;top:331px" width="8" height="9"><path d="M0.5 0 L7 4.5 L0.5 9Z" fill="#a6a6a6"/></svg>
<svg class="ic" style="left:43px;top:327px;" width="16" height="16" viewBox="0 0 16 16"><use href="#wait"/></svg>
<div class="t" style="left:63px;top:326.0px;">Waitinglist Coaches</div>
<svg style="left:27px;top:349px" width="8" height="9"><path d="M0.5 0 L7 4.5 L0.5 9Z" fill="#a6a6a6"/></svg>
<svg class="ic" style="left:43px;top:345px;" width="16" height="16" viewBox="0 0 16 16"><use href="#wait"/></svg>
<div class="t" style="left:63px;top:344.0px;">Waitinglist Referees</div>
<svg style="left:27px;top:367px" width="8" height="9"><path d="M0.5 0 L7 4.5 L0.5 9Z" fill="#a6a6a6"/></svg>
<svg class="ic" style="left:43px;top:363px;" width="16" height="16" viewBox="0 0 16 16"><use href="#wait"/></svg>
<div class="t" style="left:63px;top:362.0px;">Waitinglist Officials</div>
<svg style="left:9px;top:386px" width="9" height="8"><path d="M0 0.5 L9 0.5 L4.5 7Z" fill="#a6a6a6"/></svg>
<svg class="ic" style="left:25px;top:381px;" width="16" height="16" viewBox="0 0 16 16"><use href="#draw"/></svg>
<div class="t" style="left:45px;top:380.0px;">Draw, Draw record, Point table...</div>
<svg style="left:27px;top:403px" width="8" height="9"><path d="M0.5 0 L7 4.5 L0.5 9Z" fill="#a6a6a6"/></svg>
<svg class="ic" style="left:43px;top:399px;" width="16" height="16" viewBox="0 0 16 16"><use href="#draw"/></svg>
<div class="t" style="left:63px;top:398.0px;">Draw</div>
<svg style="left:27px;top:421px" width="8" height="9"><path d="M0.5 0 L7 4.5 L0.5 9Z" fill="#a6a6a6"/></svg>
<svg class="ic" style="left:43px;top:417px;" width="16" height="16" viewBox="0 0 16 16"><use href="#points"/></svg>
<div class="t" style="left:63px;top:416.0px;">Point table</div>
<svg style="left:27px;top:439px" width="8" height="9"><path d="M0.5 0 L7 4.5 L0.5 9Z" fill="#a6a6a6"/></svg>
<svg class="ic" style="left:43px;top:435px;" width="16" height="16" viewBox="0 0 16 16"><use href="#drawrec"/></svg>
<div class="t" style="left:63px;top:434.0px;">Draw record</div>
<svg style="left:27px;top:457px" width="8" height="9"><path d="M0.5 0 L7 4.5 L0.5 9Z" fill="#a6a6a6"/></svg>
<svg class="ic" style="left:43px;top:453px;" width="16" height="16" viewBox="0 0 16 16"><use href="#pool"/></svg>
<div class="t" style="left:63px;top:452.0px;">Pool winner</div>
<svg style="left:27px;top:475px" width="8" height="9"><path d="M0.5 0 L7 4.5 L0.5 9Z" fill="#a6a6a6"/></svg>
<svg class="ic" style="left:43px;top:471px;" width="16" height="16" viewBox="0 0 16 16"><use href="#repe"/></svg>
<div class="t" style="left:63px;top:470.0px;">Repechage</div>
<svg style="left:27px;top:493px" width="8" height="9"><path d="M0.5 0 L7 4.5 L0.5 9Z" fill="#a6a6a6"/></svg>
<svg class="ic" style="left:43px;top:489px;" width="16" height="16" viewBox="0 0 16 16"><use href="#dbl"/></svg>
<div class="t" style="left:63px;top:488.0px;">Double-Elimination</div>
<svg style="left:9px;top:511px" width="8" height="9"><path d="M0.5 0 L7 4.5 L0.5 9Z" fill="#a6a6a6"/></svg>
<svg class="ic" style="left:25px;top:507px;" width="16" height="16" viewBox="0 0 16 16"><use href="#result"/></svg>
<div class="t" style="left:45px;top:506.0px;">Result</div>
<div class="" style="left:324px;top:28px;width:962px;height:215px;border:1px solid #8a8a8a;border-right-color:#7a7a7a;border-bottom-color:#7a7a7a;box-shadow:1px 1px 1px #a8a8a8;background:#f0f0f0"></div>
<div class="" style="left:325px;top:29px;width:960px;height:24px;background:linear-gradient(90deg,#ffffff 0%,#fbfbfb 50%,#f2f2f2 85%)"></div>
<svg class="ic" style="left:326px;top:32px;" width="16" height="16" viewBox="0 0 16 16"><use href="#house"/></svg>
<div class="t" style="left:347px;top:31.84px;">Events</div>
<svg class="ic" style="left:1168px;top:32px;" width="16" height="16" viewBox="0 0 16 16"><use href="#tbedit"/></svg>
<div class="" style="left:1188px;top:30px;width:1px;height:22px;background:#dcdcdc"></div>
<svg class="ic" style="left:1193px;top:32px;" width="16" height="16" viewBox="0 0 16 16"><use href="#tbfolder"/></svg>
<div class="" style="left:1213px;top:30px;width:1px;height:22px;background:#dcdcdc"></div>
<svg class="ic" style="left:1218px;top:32px;" width="16" height="16" viewBox="0 0 16 16"><use href="#timer"/></svg>
<div class="" style="left:1238px;top:30px;width:1px;height:22px;background:#dcdcdc"></div>
<svg class="ic" style="left:1243px;top:33px;" width="16" height="16" viewBox="0 0 16 16"><use href="#max"/></svg>
<svg class="ic" style="left:1267px;top:35px;" width="16" height="16" viewBox="0 0 16 16"><use href="#x"/></svg>
<div class="" style="left:327px;top:54px;width:234px;height:22px;background:#fff;border:1px solid #a8a8a8"></div>
<div class="" style="left:565px;top:54px;width:22px;height:22px;background:#fafafa;border:1px solid #cfcfcf;border-radius:3px"></div>
<svg class="ic" style="left:568px;top:57px;" width="16" height="16" viewBox="0 0 16 16"><use href="#search"/></svg>
<div class="" style="left:601px;top:54px;width:19px;height:22px;background:#fdfdfd;border:1px solid #cfcfcf;border-radius:3px"></div>
<svg class="ic" style="left:603px;top:57px;" width="16" height="16" viewBox="0 0 16 16"><use href="#refresh"/></svg>
<svg class="ic" style="left:634px;top:57px;" width="15" height="15" viewBox="0 0 16 16"><use href="#radio_on"/></svg>
<div class="t" style="left:653px;top:55.84px;">Show actual events</div>
<svg class="ic" style="left:762px;top:57px;" width="15" height="15" viewBox="0 0 16 16"><use href="#radio_off"/></svg>
<div class="t" style="left:782px;top:55.84px;">Show all events</div>
<div class="" style="left:1030px;top:62px;width:146px;height:5px;background:#1e78d8;border-radius:3px"></div>
<div class="t" style="left:1186px;top:55.84px;">1 / 1 Record found</div>
<div class="" style="left:327px;top:79px;width:957px;height:160px;background:#fff;border:1px solid #a8a8a8"></div>
<div class="" style="left:328px;top:105px;width:944px;height:18px;background:#a0a0ff"></div>
<div class="" style="left:1272px;top:105px;width:11px;height:133px;background:#f0f0f0"></div>
<div class="t" style="left:327px;top:83.84px;width:152px;text-align:center;letter-spacing:-0.6px">EVENT</div>
<div class="t" style="left:329px;top:105.84px;">Knowledge Base</div>
<div class="" style="left:479px;top:80px;width:1px;height:25px;background:#e4e4e4"></div>
<div class="t" style="left:479px;top:83.84px;width:125px;text-align:center;letter-spacing:-0.6px">DEADLINE</div>
<div class="t" style="left:481px;top:105.84px;letter-spacing:-0.45px">2023.12.31</div>
<div class="" style="left:604px;top:80px;width:1px;height:25px;background:#e4e4e4"></div>
<div class="t" style="left:604px;top:83.84px;width:134px;text-align:center;letter-spacing:-0.6px">START DATE</div>
<div class="t" style="left:606px;top:105.84px;letter-spacing:-0.45px">2023.12.31</div>
<div class="" style="left:738px;top:80px;width:1px;height:25px;background:#e4e4e4"></div>
<div class="t" style="left:738px;top:83.84px;width:125px;text-align:center;letter-spacing:-0.6px">END DATE</div>
<div class="t" style="left:740px;top:105.84px;letter-spacing:-0.45px">2023.12.31</div>
<div class="" style="left:863px;top:80px;width:1px;height:25px;background:#e4e4e4"></div>
<div class="t" style="left:863px;top:83.84px;width:124px;text-align:center;letter-spacing:-0.6px">COUNTRY</div>
<div class="t" style="left:865px;top:105.84px;letter-spacing:-0.45px">AUSTRIA</div>
<div class="" style="left:987px;top:80px;width:1px;height:25px;background:#e4e4e4"></div>
<div class="t" style="left:987px;top:83.84px;width:152px;text-align:center;letter-spacing:-0.6px">ADDRESS</div>
<div class="t" style="left:989px;top:105.84px;">Knowledge Base</div>
<div class="" style="left:1139px;top:80px;width:1px;height:25px;background:#e4e4e4"></div>
<div class="t" style="left:1139px;top:83.84px;width:133px;text-align:center;letter-spacing:-0.6px">TYPE</div>
<div class="t" style="left:1141px;top:105.84px;">Tournament</div>
<svg class="ic" style="left:1272px;top:86px;" width="12" height="12" viewBox="0 0 16 16"><use href="#colhdr"/></svg>
<div class="" style="left:324px;top:249px;width:962px;height:784px;border:1px solid #8a8a8a;border-right-color:#7a7a7a;border-bottom-color:#7a7a7a;box-shadow:1px 1px 1px #a8a8a8;background:#f0f0f0"></div>
<div class="" style="left:325px;top:250px;width:960px;height:24px;background:linear-gradient(90deg,#ffffff 0%,#f4f4f4 60%,#e8e8e8 100%)"></div>
<svg class="ic" style="left:1243px;top:254px;" width="16" height="16" viewBox="0 0 16 16"><use href="#max"/></svg>
<svg class="ic" style="left:1268px;top:256px;" width="16" height="16" viewBox="0 0 16 16"><use href="#x"/></svg>
<div class="" style="left:325px;top:274px;width:24px;height:758px;background:linear-gradient(90deg,#f8f8f8,#e2e2e2)"></div>
<div class="" style="left:351px;top:274px;width:932px;height:733px;border:1px solid #c0c0c0;background:#f0f0f0"></div>
<div style="left:358px;top:277px;width:917px;height:726px;background:#0c0f16;overflow:hidden"><svg width="917" height="726" style="left:0;top:0"><defs><radialGradient id="glow" cx="0.5" cy="0.5" r="0.5"><stop offset="0" stop-color="#e8eeff" stop-opacity="0.95"/><stop offset="0.12" stop-color="#a8b4d8" stop-opacity="0.7"/><stop offset="0.45" stop-color="#3c4868" stop-opacity="0.45"/><stop offset="1" stop-color="#0a0e18" stop-opacity="0"/></radialGradient><linearGradient id="band" x1="0" y1="0" x2="1" y2="0"><stop offset="0" stop-color="#000" stop-opacity="0"/><stop offset="0.5" stop-color="#000" stop-opacity="0.8"/><stop offset="1" stop-color="#000" stop-opacity="0"/></linearGradient></defs><linearGradient id="rg" x1="0" y1="0" x2="1" y2="0"><stop offset="0" stop-color="#141822" stop-opacity="0"/><stop offset="0.4" stop-color="#141822" stop-opacity="0.7"/><stop offset="1" stop-color="#141822" stop-opacity="0.6"/></linearGradient><rect x="450" y="600" width="467" height="126" fill="url(#rg)"/><path d="M322 655 L385 655 L410 726 L347 726Z" fill="url(#band)" opacity="0.9"/><ellipse cx="650" cy="690" rx="130" ry="55" fill="url(#glow)" transform="rotate(-26 650 690)" opacity="0.9"/><path d="M30 725 L 157 665" stroke="#a8b0c0" stroke-width="1.2" opacity="0.75"/><path d="M585 727 L 660 690" stroke="#8a9ad0" stroke-width="1.6" opacity="0.5"/><path d="M652 692 L 704 666" stroke="#f4f8ff" stroke-width="1.8" opacity="0.9"/></svg></div>
<svg class="ic" style="left:329px;top:1012px;" width="16" height="16" viewBox="0 0 16 16"><use href="#max"/></svg>
<svg class="ic" style="left:353px;top:1012px;" width="16" height="16" viewBox="0 0 16 16"><use href="#cattab"/></svg>
<div class="t" style="left:376px;top:1011.84px;">Competitor Categories</div>
<div class="" style="left:502px;top:1010px;width:1px;height:20px;background:#d0d0d0"></div>
<svg class="ic" style="left:507px;top:1012px;" width="16" height="16" viewBox="0 0 16 16"><use href="#offtab"/></svg>
<div class="t" style="left:530px;top:1011.84px;letter-spacing:-0.35px">Officials Categories, Coach, Referee, Press</div>
<div class="" style="left:756px;top:1010px;width:1px;height:20px;background:#d0d0d0"></div>
<div class="" style="left:758px;top:1008px;width:81px;height:24px;background:linear-gradient(180deg,#c6c6c6,#d8d8d8)"></div>
<svg class="ic" style="left:762px;top:1012px;" width="16" height="16" viewBox="0 0 16 16"><use href="#run"/></svg>
<div class="t" style="left:784px;top:1011.84px;">Welcome</div>
<div class="" style="left:0px;top:1039px;width:1286px;height:137px;border:1px solid #8a8a8a;border-right-color:#7a7a7a;border-bottom-color:#7a7a7a;box-shadow:1px 1px 1px #a8a8a8;background:#f0f0f0"></div>
<div class="" style="left:1px;top:1040px;width:1284px;height:23px;background:linear-gradient(90deg,#ffffff 0%,#fbfbfb 50%,#f2f2f2 85%)"></div>
<svg class="ic" style="left:2px;top:1044px;" width="16" height="16" viewBox="0 0 16 16"><use href="#console"/></svg>
<div class="t" style="left:23px;top:1042.84px;">Message Console</div>
<svg class="ic" style="left:1243px;top:1043px;" width="16" height="16" viewBox="0 0 16 16"><use href="#trash"/></svg>
<svg class="ic" style="left:1265px;top:1044px;" width="16" height="16" viewBox="0 0 16 16"><use href="#max"/></svg>
<div class="" style="left:3px;top:1064px;width:1281px;height:108px;border:1px solid #a8a8a8;border-right-color:#c8c8c8;border-bottom-color:#c8c8c8;background:#f0f0f0"></div>
<div class="" style="left:0px;top:1177px;width:1720px;height:23px;background:linear-gradient(180deg,#d4d6dc,#e4e5e8)"></div>
<div class="t" style="left:5px;top:1180px;font-size:10.5px;font-weight:bold;letter-spacing:0">2024-01-23 11:34:36:626 [INFO] Messages found 0</div>
<div class="" style="left:1712px;top:1196px;width:2px;height:2px;background:#a0a0a0"></div>
<div class="" style="left:1708px;top:1196px;width:2px;height:2px;background:#a0a0a0"></div>
<div class="" style="left:1704px;top:1196px;width:2px;height:2px;background:#a0a0a0"></div>
<div class="" style="left:1712px;top:1192px;width:2px;height:2px;background:#a0a0a0"></div>
<div class="" style="left:1708px;top:1192px;width:2px;height:2px;background:#a0a0a0"></div>
<div class="" style="left:1712px;top:1188px;width:2px;height:2px;background:#a0a0a0"></div>
<div class="" style="left:1292px;top:28px;width:426px;height:1148px;border:1px solid #8a8a8a;border-right-color:#7a7a7a;border-bottom-color:#7a7a7a;box-shadow:1px 1px 1px #a8a8a8;background:#f0f0f0"></div>
<div class="" style="left:1293px;top:29px;width:424px;height:22px;background:linear-gradient(90deg,#3a7ace 0%,#6a9ed8 40%,#b8d0e8 80%,#dce6f0 100%)"></div>
<svg class="ic" style="left:1294px;top:32px;" width="16" height="16" viewBox="0 0 16 16"><use href="#overview"/></svg>
<div class="t" style="left:1315px;top:31.84px;color:#fff">Main data / Entries</div>
<svg class="ic" style="left:1675px;top:33px;" width="16" height="16" viewBox="0 0 16 16"><use href="#max"/></svg>
<svg class="ic" style="left:1700px;top:35px;" width="16" height="16" viewBox="0 0 16 16"><use href="#x"/></svg>
<div class="" style="left:1295px;top:53px;width:420px;height:1119px;background:#fff;border:1px solid #b8b8b8"></div>
<div class="" style="left:1704px;top:54px;width:10px;height:1006px;background:#d6d6d6"></div>
<div class="" style="left:1704px;top:1060px;width:10px;height:111px;background:#ececec"></div>
<div class="" style="left:1306px;top:64px;width:388px;height:25px;background:linear-gradient(90deg,#dcdfe4 0%,#e6e8ea 50%,#eff0f0 90%)"></div>
<div class="" style="left:1306px;top:64px;width:3px;height:1px;background:#3a78e0"></div>
<div class="" style="left:1306px;top:64px;width:1px;height:3px;background:#3a78e0"></div>
<div class="" style="left:1691px;top:64px;width:3px;height:1px;background:#3a78e0"></div>
<div class="t" style="left:1317px;top:67.84px;font-weight:bold;letter-spacing:0">Main data</div>
<svg class="ic" style="left:1669px;top:68px;" width="16" height="16" viewBox="0 0 16 16"><use href="#collapse"/></svg>
<div class="" style="left:1306px;top:89px;width:388px;height:183px;background:#f0f0f0;border:1px solid #a8a8a8;border-top:none"></div>
<svg class="ic" style="left:1318px;top:99px;" width="16" height="16" viewBox="0 0 16 16"><use href="#comp"/></svg>
<div class="t" style="left:1338px;top:98.84px;">Competitors</div>
<svg class="ic" style="left:1318px;top:117px;" width="16" height="16" viewBox="0 0 16 16"><use href="#coach"/></svg>
<div class="t" style="left:1338px;top:116.84px;">Coaches</div>
<svg class="ic" style="left:1318px;top:135px;" width="16" height="16" viewBox="0 0 16 16"><use href="#ref"/></svg>
<div class="t" style="left:1338px;top:134.84px;">Referees</div>
<svg class="ic" style="left:1318px;top:153px;" width="16" height="16" viewBox="0 0 16 16"><use href="#off"/></svg>
<div class="t" style="left:1338px;top:152.84px;">Officials</div>
<svg class="ic" style="left:1318px;top:171px;" width="16" height="16" viewBox="0 0 16 16"><use href="#club"/></svg>
<div class="t" style="left:1338px;top:170.84px;">Clubs</div>
<svg class="ic" style="left:1318px;top:189px;" width="16" height="16" viewBox="0 0 16 16"><use href="#cats"/></svg>
<div class="t" style="left:1338px;top:188.84px;">Categories</div>
<svg class="ic" style="left:1318px;top:207px;" width="16" height="16" viewBox="0 0 16 16"><use href="#globe"/></svg>
<div class="t" style="left:1338px;top:206.84px;">Nations</div>
<svg class="ic" style="left:1318px;top:225px;" width="16" height="16" viewBox="0 0 16 16"><use href="#fed"/></svg>
<div class="t" style="left:1338px;top:224.84px;">Federal associations / Regions</div>
<svg class="ic" style="left:1318px;top:243px;" width="16" height="16" viewBox="0 0 16 16"><use href="#kata"/></svg>
<div class="t" style="left:1338px;top:242.84px;">Kata</div>
<div class="" style="left:1306px;top:286px;width:388px;height:25px;background:linear-gradient(90deg,#dcdfe4 0%,#e6e8ea 50%,#eff0f0 90%)"></div>
<div class="" style="left:1306px;top:286px;width:3px;height:1px;background:#3a78e0"></div>
<div class="" style="left:1306px;top:286px;width:1px;height:3px;background:#3a78e0"></div>
<div class="" style="left:1691px;top:286px;width:3px;height:1px;background:#3a78e0"></div>
<div class="t" style="left:1317px;top:289.84px;font-weight:bold;letter-spacing:0">Entries - Overviews / Statistics</div>
<svg class="ic" style="left:1669px;top:290px;" width="16" height="16" viewBox="0 0 16 16"><use href="#collapse"/></svg>
<div class="" style="left:1306px;top:311px;width:388px;height:255px;background:#f0f0f0;border:1px solid #a8a8a8;border-top:none"></div>
<svg class="ic" style="left:1318px;top:321px;" width="16" height="16" viewBox="0 0 16 16"><use href="#clip"/></svg>
<div class="t" style="left:1338px;top:320.84px;">All entries</div>
<svg class="ic" style="left:1318px;top:339px;" width="16" height="16" viewBox="0 0 16 16"><use href="#wait"/></svg>
<div class="t" style="left:1338px;top:338.84px;">Waitinglist entries</div>
<svg class="ic" style="left:1318px;top:357px;" width="16" height="16" viewBox="0 0 16 16"><use href="#clip"/></svg>
<div class="t" style="left:1338px;top:356.84px;">Coach entries</div>
<svg class="ic" style="left:1318px;top:375px;" width="16" height="16" viewBox="0 0 16 16"><use href="#clip"/></svg>
<div class="t" style="left:1338px;top:374.84px;">Referee entries</div>
<svg class="ic" style="left:1318px;top:393px;" width="16" height="16" viewBox="0 0 16 16"><use href="#clip"/></svg>
<div class="t" style="left:1338px;top:392.84px;">Officials entries</div>
<svg class="ic" style="left:1318px;top:411px;" width="16" height="16" viewBox="0 0 16 16"><use href="#clip"/></svg>
<div class="t" style="left:1338px;top:410.84px;">Head of Delegation</div>
<svg class="ic" style="left:1318px;top:429px;" width="16" height="16" viewBox="0 0 16 16"><use href="#report"/></svg>
<div class="t" style="left:1338px;top:428.84px;">Clubs and entries</div>
<svg class="ic" style="left:1318px;top:447px;" width="16" height="16" viewBox="0 0 16 16"><use href="#report"/></svg>
<div class="t" style="left:1338px;top:446.84px;">States / Regions and entries</div>
<svg class="ic" style="left:1318px;top:465px;" width="16" height="16" viewBox="0 0 16 16"><use href="#report"/></svg>
<div class="t" style="left:1338px;top:464.84px;">Nations and entries</div>
<svg class="ic" style="left:1318px;top:483px;" width="16" height="16" viewBox="0 0 16 16"><use href="#report"/></svg>
<div class="t" style="left:1338px;top:482.84px;">Categories and entries</div>
<svg class="ic" style="left:1318px;top:501px;" width="16" height="16" viewBox="0 0 16 16"><use href="#report"/></svg>
<div class="t" style="left:1338px;top:500.84px;">Competitors in categories</div>
<svg class="ic" style="left:1318px;top:519px;" width="16" height="16" viewBox="0 0 16 16"><use href="#report"/></svg>
<div class="t" style="left:1338px;top:518.84px;">Clubs, Competitors, Categories</div>
<svg class="ic" style="left:1318px;top:537px;" width="16" height="16" viewBox="0 0 16 16"><use href="#report"/></svg>
<div class="t" style="left:1338px;top:536.84px;">Clubs, Categories, Competitors</div>
<div class="" style="left:1306px;top:580px;width:388px;height:25px;background:linear-gradient(90deg,#dcdfe4 0%,#e6e8ea 50%,#eff0f0 90%)"></div>
<div class="" style="left:1306px;top:580px;width:3px;height:1px;background:#3a78e0"></div>
<div class="" style="left:1306px;top:580px;width:1px;height:3px;background:#3a78e0"></div>
<div class="" style="left:1691px;top:580px;width:3px;height:1px;background:#3a78e0"></div>
<div class="t" style="left:1317px;top:583.84px;font-weight:bold;letter-spacing:0">Reports</div>
<svg class="ic" style="left:1669px;top:584px;" width="16" height="16" viewBox="0 0 16 16"><use href="#collapse"/></svg>
<div class="" style="left:1306px;top:605px;width:388px;height:471px;background:#f0f0f0;border:1px solid #a8a8a8;border-top:none"></div>
<svg class="ic" style="left:1318px;top:615px;" width="16" height="16" viewBox="0 0 16 16"><use href="#report"/></svg>
<div class="t" style="left:1338px;top:614.84px;">Result Book - Countries</div>
<svg class="ic" style="left:1318px;top:633px;" width="16" height="16" viewBox="0 0 16 16"><use href="#report"/></svg>
<div class="t" style="left:1338px;top:632.84px;">Result Book - Countries and Clubs</div>
<svg class="ic" style="left:1318px;top:651px;" width="16" height="16" viewBox="0 0 16 16"><use href="#report"/></svg>
<div class="t" style="left:1338px;top:650.84px;">Result Book - Clubs</div>
<svg class="ic" style="left:1318px;top:687px;" width="16" height="16" viewBox="0 0 16 16"><use href="#report"/></svg>
<div class="t" style="left:1338px;top:686.84px;">Country Entries</div>
<svg class="ic" style="left:1318px;top:705px;" width="16" height="16" viewBox="0 0 16 16"><use href="#report"/></svg>
<div class="t" style="left:1338px;top:704.84px;">Club Entries</div>
<svg class="ic" style="left:1318px;top:723px;" width="16" height="16" viewBox="0 0 16 16"><use href="#report"/></svg>
<div class="t" style="left:1338px;top:722.84px;">Participation (Total)</div>
<svg class="ic" style="left:1318px;top:741px;" width="16" height="16" viewBox="0 0 16 16"><use href="#report"/></svg>
<div class="t" style="left:1338px;top:740.84px;">Participation (Entries By Birthday) by Club</div>
<svg class="ic" style="left:1318px;top:759px;" width="16" height="16" viewBox="0 0 16 16"><use href="#report"/></svg>
<div class="t" style="left:1338px;top:758.84px;">Participation (Entries)</div>
<svg class="ic" style="left:1318px;top:777px;" width="16" height="16" viewBox="0 0 16 16"><use href="#report"/></svg>
<div class="t" style="left:1338px;top:776.84px;">Participation (Entries) by Club</div>
<svg class="ic" style="left:1318px;top:795px;" width="16" height="16" viewBox="0 0 16 16"><use href="#report"/></svg>
<div class="t" style="left:1338px;top:794.84px;">Participation (Entries By Birthday)</div>
<svg class="ic" style="left:1318px;top:813px;" width="16" height="16" viewBox="0 0 16 16"><use href="#report"/></svg>
<div class="t" style="left:1338px;top:812.84px;">Participation (Entries By Birthday) by Club</div>
<svg class="ic" style="left:1318px;top:831px;" width="16" height="16" viewBox="0 0 16 16"><use href="#report"/></svg>
<div class="t" style="left:1338px;top:830.84px;">Participation Count</div>
<svg class="ic" style="left:1318px;top:849px;" width="16" height="16" viewBox="0 0 16 16"><use href="#report"/></svg>
<div class="t" style="left:1338px;top:848.84px;">Participation Count by Club</div>
<svg class="ic" style="left:1318px;top:867px;" width="16" height="16" viewBox="0 0 16 16"><use href="#report"/></svg>
<div class="t" style="left:1338px;top:866.84px;">Statistics</div>
<svg class="ic" style="left:1318px;top:885px;" width="16" height="16" viewBox="0 0 16 16"><use href="#report"/></svg>
<div class="t" style="left:1338px;top:884.84px;">Participation Count - Officials</div>
<svg class="ic" style="left:1318px;top:903px;" width="16" height="16" viewBox="0 0 16 16"><use href="#report"/></svg>
<div class="t" style="left:1338px;top:902.84px;">Officials per Category</div>
<svg class="ic" style="left:1318px;top:921px;" width="16" height="16" viewBox="0 0 16 16"><use href="#report"/></svg>
<div class="t" style="left:1338px;top:920.84px;">Officials per Category by Club</div>
<svg class="ic" style="left:1318px;top:939px;" width="16" height="16" viewBox="0 0 16 16"><use href="#report"/></svg>
<div class="t" style="left:1338px;top:938.84px;">Officials per Country</div>
<svg class="ic" style="left:1318px;top:957px;" width="16" height="16" viewBox="0 0 16 16"><use href="#report"/></svg>
<div class="t" style="left:1338px;top:956.84px;">Officials per Club</div>
<svg class="ic" style="left:1318px;top:975px;" width="16" height="16" viewBox="0 0 16 16"><use href="#report"/></svg>
<div class="t" style="left:1338px;top:974.84px;">Officials by Other Role</div>
<svg class="ic" style="left:1318px;top:993px;" width="16" height="16" viewBox="0 0 16 16"><use href="#report"/></svg>
<div class="t" style="left:1338px;top:992.84px;">Entries in Categories - Country</div>
<svg class="ic" style="left:1318px;top:1011px;" width="16" height="16" viewBox="0 0 16 16"><use href="#report"/></svg>
<div class="t" style="left:1338px;top:1010.84px;">Entries in Categories</div>
<svg class="ic" style="left:1318px;top:1029px;" width="16" height="16" viewBox="0 0 16 16"><use href="#report"/></svg>
<div class="t" style="left:1338px;top:1028.84px;">Entries in Categories 1 Athlete</div>
<svg class="ic" style="left:1318px;top:1047px;" width="16" height="16" viewBox="0 0 16 16"><use href="#report"/></svg>
<div class="t" style="left:1338px;top:1046.84px;">Entries in Categories - Weigh-In</div>
<div style="left:1296px;top:1080px;width:408px;height:91px;overflow:hidden">
</div>
<div class="" style="left:1306px;top:1090px;width:388px;height:25px;background:linear-gradient(90deg,#dcdfe4 0%,#e6e8ea 50%,#eff0f0 90%)"></div>
<div class="" style="left:1306px;top:1090px;width:3px;height:1px;background:#3a78e0"></div>
<div class="" style="left:1306px;top:1090px;width:1px;height:3px;background:#3a78e0"></div>
<div class="" style="left:1691px;top:1090px;width:3px;height:1px;background:#3a78e0"></div>
<div class="t" style="left:1317px;top:1093.84px;font-weight:bold;letter-spacing:0">Entries - Chart</div>
<svg class="ic" style="left:1669px;top:1094px;" width="16" height="16" viewBox="0 0 16 16"><use href="#collapse"/></svg>
<div style="left:1306px;top:1115px;width:388px;height:56px;overflow:hidden;background:#f0f0f0;border-left:1px solid #a8a8a8;border-right:1px solid #a8a8a8">
<svg class="ic" style="left:11px;top:10px" width="16" height="16" viewBox="0 0 16 16"><use href="#bars"/></svg>
<div class="t" style="left:31px;top:9.84px">Clubs and entries</div>
<svg class="ic" style="left:11px;top:28px" width="16" height="16" viewBox="0 0 16 16"><use href="#pie"/></svg>
<div class="t" style="left:31px;top:27.84px">Clubs and entries</div>
<svg class="ic" style="left:11px;top:46px" width="16" height="16" viewBox="0 0 16 16"><use href="#bars"/></svg>
<div class="t" style="left:31px;top:45.84px">States / Regions and entries</div>
</div>
<div class="" style="left:267px;top:250px;width:986px;height:692px;background:#ececec;border:1px solid #b8b8b8;border-radius:8px;box-shadow:0 4px 18px rgba(0,0,0,0.25)"></div>
<svg class="ic" style="left:276px;top:256px;" width="16" height="16" viewBox="0 0 16 16"><use href="#logo"/></svg>
<div class="" style="left:268px;top:931px;width:984px;height:11px;background:linear-gradient(180deg,#d8d8d8,#e6e6e6);border-radius:0 0 8px 8px"></div>
<div class="" style="left:762px;top:920px;width:118px;height:20px;border:1px solid #bcbcbc;border-radius:0 0 3px 3px;background:#e2e2e2"></div>
<div class="" style="left:780px;top:924px;width:14px;height:14px;background:#c4c4c4;border:1px solid #a8a8a8"></div>
<div class="t" style="left:800px;top:922.34px;color:#a8a8a8">Accreditation...</div>
<div class="" style="left:885px;top:920px;width:118px;height:20px;border:1px solid #bcbcbc;border-radius:0 0 3px 3px;background:#e2e2e2"></div>
<div class="" style="left:903px;top:924px;width:14px;height:14px;background:#c4c4c4;border:1px solid #a8a8a8"></div>
<div class="t" style="left:923px;top:922.34px;color:#a8a8a8">Back number...</div>
<div class="" style="left:1008px;top:920px;width:118px;height:20px;border:1px solid #bcbcbc;border-radius:0 0 3px 3px;background:#e2e2e2"></div>
<div class="" style="left:1026px;top:924px;width:14px;height:14px;background:#c4c4c4;border:1px solid #a8a8a8"></div>
<div class="t" style="left:1046px;top:922.34px;color:#a8a8a8">Certificate</div>
<div class="" style="left:1131px;top:920px;width:118px;height:20px;border:1px solid #bcbcbc;border-radius:0 0 3px 3px;background:#e2e2e2"></div>
<div class="" style="left:1149px;top:924px;width:14px;height:14px;background:#c4c4c4;border:1px solid #a8a8a8"></div>
<div class="t" style="left:1169px;top:922.34px;color:#a8a8a8">Label</div>
<svg class="ic" style="left:307px;top:256px;" width="16" height="16" viewBox="0 0 16 16"><use href="#folder"/></svg>
<svg class="ic" style="left:366px;top:256px;" width="16" height="16" viewBox="0 0 16 16"><use href="#edit"/></svg>
<div class="" style="left:256px;top:261px;width:1008px;height:672px;background:#f2f2f2;border:1px solid #a0a0a0;border-radius:8px;box-shadow:0 16px 48px rgba(0,0,0,0.34),0 0 8px rgba(0,0,0,0.12)"></div>
<svg class="ic" style="left:264px;top:267px;" width="16" height="16" viewBox="0 0 16 16"><use href="#logo"/></svg>
<svg class="ic" style="left:296px;top:267px;" width="16" height="16" viewBox="0 0 16 16"><use href="#folder"/></svg>
<div class="t" style="left:318px;top:266.84px;">File</div>
<svg class="ic" style="left:352px;top:267px;" width="16" height="16" viewBox="0 0 16 16"><use href="#edit"/></svg>
<div class="t" style="left:374px;top:266.84px;">Edit</div>
<div class="t" style="left:410px;top:266.84px;">Options</div>
<div class="t" style="left:704px;top:266.84px;color:#444">Registration of teams</div>
<div class="" style="left:1149px;top:274px;width:11px;height:1px;background:#222"></div>
<div class="" style="left:1193px;top:270px;width:11px;height:11px;border:1px solid #222;border-radius:2px"></div>
<svg style="left:1237px;top:270px" width="11" height="11"><path d="M0.5 0.5L10.5 10.5M10.5 0.5L0.5 10.5" stroke="#222" stroke-width="1.1"/></svg>
<div class="" style="left:258px;top:299px;width:732px;height:595px;border:1px solid #d4d4d4"></div>
<div class="" style="left:262px;top:291px;width:76px;height:14px;background:#f2f2f2"></div>
<div class="t" style="left:264px;top:289.84px;font-weight:bold;font-size:10.5px;letter-spacing:0">Register teams</div>
<div class="" style="left:263px;top:309px;width:722px;height:580px;border:1px solid #c8c8c8"></div>
<div class="" style="left:994px;top:299px;width:268px;height:595px;border:1px solid #d4d4d4"></div>
<div class="" style="left:998px;top:291px;width:82px;height:14px;background:#f2f2f2"></div>
<div class="t" style="left:1000px;top:290.84px;">Effected Draws</div>
<div class="" style="left:999px;top:311px;width:258px;height:578px;background:#fff;border:1px solid #c8c8c8"></div>
<div class="t" style="left:281px;top:387.84px;">Name*</div>
<div class="" style="left:356px;top:385px;width:344px;height:22px;background:#fff;border:1px solid #b4b4b4"></div>
<div class="t" style="left:363px;top:387.84px;">My Team</div>
<div class="t" style="left:281px;top:415.84px;">Club*</div>
<div class="" style="left:354px;top:411px;width:134px;height:26px;background:#fff;border:2px solid #8ab8ec;border-radius:3px"></div>
<div class="" style="left:466px;top:413px;width:1px;height:22px;background:#d4d4d4"></div>
<svg style="left:471px;top:421px" width="10" height="6"><path d="M0 0 L10 0 L5 6Z" fill="#555"/></svg>
<div class="t" style="left:281px;top:443.84px;letter-spacing:0.1px">Competitors*</div>
<div class="" style="left:356px;top:441px;width:258px;height:162px;background:#fff;border:1px solid #b4b4b4"></div>
<div class="" style="left:706px;top:441px;width:258px;height:162px;background:#fff;border:1px solid #b4b4b4"></div>
<div class="" style="left:649px;top:442px;width:22px;height:21px;background:#fdfdfd;border:1px solid #cfcfcf;border-radius:3px"></div>
<div class="t" style="left:655px;top:443.84px;">&lt;</div>
<div class="" style="left:649px;top:470px;width:22px;height:21px;background:#fdfdfd;border:1px solid #cfcfcf;border-radius:3px"></div>
<div class="t" style="left:655px;top:471.84px;">&gt;</div>
<div class="" style="left:677px;top:498px;width:23px;height:21px;background:#fdfdfd;border:1px solid #cfcfcf;border-radius:3px"></div>
<svg class="ic" style="left:680px;top:500px;" width="16" height="16" viewBox="0 0 16 16"><use href="#editsm"/></svg>
<div class="" style="left:677px;top:525px;width:23px;height:21px;background:#fdfdfd;border:1px solid #cfcfcf;border-radius:3px"></div>
<svg class="ic" style="left:681px;top:528px;" width="16" height="16" viewBox="0 0 16 16"><use href="#add"/></svg>
<div class="" style="left:706px;top:413px;width:23px;height:21px;background:#fdfdfd;border:1px solid #cfcfcf;border-radius:3px"></div>
<svg class="ic" style="left:709px;top:416px;" width="16" height="16" viewBox="0 0 16 16"><use href="#search"/></svg>
<div class="" style="left:734px;top:413px;width:23px;height:21px;background:#fdfdfd;border:1px solid #cfcfcf;border-radius:3px"></div>
<svg class="ic" style="left:737px;top:415px;" width="16" height="16" viewBox="0 0 16 16"><use href="#editsm"/></svg>
<div class="" style="left:762px;top:413px;width:23px;height:21px;background:#fdfdfd;border:1px solid #cfcfcf;border-radius:3px"></div>
<svg class="ic" style="left:766px;top:416px;" width="16" height="16" viewBox="0 0 16 16"><use href="#add"/></svg>
<div class="t" style="left:281px;top:606.84px;">Categories*</div>
<div class="" style="left:356px;top:609px;width:143px;height:182px;background:#fff;border:1px solid #b4b4b4"></div>
<div class="t" style="left:363px;top:610.84px;">Team Category (18 - 98,)</div>
<div class="" style="left:357px;top:798px;width:14px;height:14px;background:#fff;border:1px solid #555;border-radius:2px"></div>
<div class="t" style="left:375px;top:796.84px;">Save in Entry Waitinglist</div>
<div class="" style="left:603px;top:903px;width:112px;height:22px;background:#fdfdfd;border:1px solid #cfcfcf;border-radius:3px"></div>
<svg class="ic" style="left:619px;top:906px;" width="16" height="16" viewBox="0 0 16 16"><use href="#save"/></svg>
<div class="t" style="left:638px;top:905.84px;">Save entries</div>
<div class="" style="left:724px;top:903px;width:79px;height:22px;background:#fdfdfd;border:1px solid #cfcfcf;border-radius:3px"></div>
<svg class="ic" style="left:740px;top:906px;" width="16" height="16" viewBox="0 0 16 16"><use href="#closebtn"/></svg>
<div class="t" style="left:759px;top:905.84px;">Close</div>
<div class="" style="left:812px;top:903px;width:104px;height:22px;background:#fdfdfd;border:1px solid #cfcfcf;border-radius:3px"></div>
<svg class="ic" style="left:827px;top:906px;" width="16" height="16" viewBox="0 0 16 16"><use href="#reset"/></svg>
<div class="t" style="left:844px;top:905.84px;">Reset form</div>
<div class="" style="left:354px;top:438px;width:135px;height:101px;background:#fff;border:1px solid #a0a0a0;box-shadow:2px 2px 3px rgba(0,0,0,0.25)"></div>
<div class="" style="left:355px;top:438px;width:133px;height:19px;background:#2a72bf"></div>
<div class="t" style="left:361px;top:459.84px;">Best Club(MYC)</div>
<div class="t" style="left:361px;top:479.84px;">Club 1[2](CLB1[2])</div>
<div class="t" style="left:361px;top:499.84px;">Club 2(CLB2)</div>
<div class="t" style="left:361px;top:519.84px;">Club 3(CLB3)</div>
<svg style="left:0;top:0" width="1720" height="1200"><path d="M719 432 L987 528 L850 560 L820 695 Z" fill="#ffffff" opacity="0.75"/><path d="M729.5 440.5 L960 526 L845 553.75 L818 668.75 Z" fill="#f08888"/></svg>
</body></html>
